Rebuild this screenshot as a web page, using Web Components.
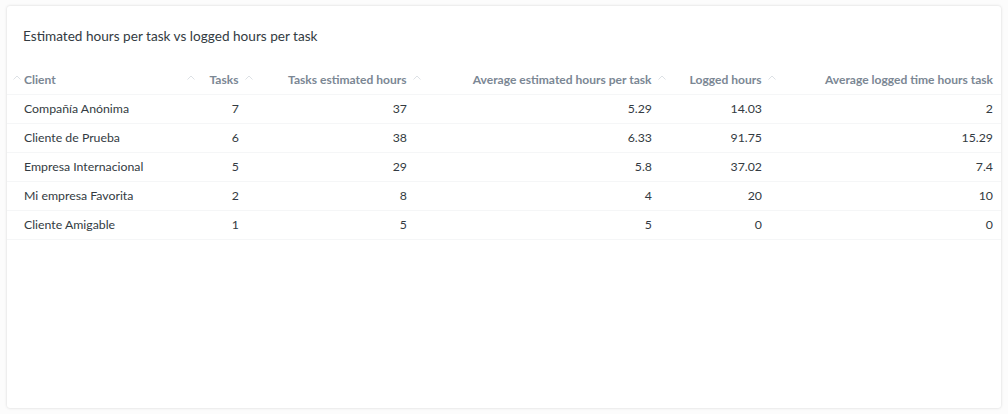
<!DOCTYPE html>
<html>
<head>
<meta charset="utf-8">
<title>Estimated hours per task</title>
<style>
  html, body { margin: 0; height: 100%; background: #fcfcfc; }
  body { padding: 6px 7px 6px 7px; box-sizing: border-box; height: 414px; font-family: Lato, "Open Sans", sans-serif; overflow: hidden; }
</style>
</head>
<body>
<report-card heading="Estimated hours per task vs logged hours per task">
  <report-table></report-table>
</report-card>

<script>
//card with a heading, content goes in the slot
const cardTpl = document.createElement("template");
cardTpl.innerHTML = `
<style>
  :host { display: block; height: 100%; box-sizing: border-box; background: #fff; border-radius: 3px;
    box-shadow: 0 0 3px rgba(0,0,0,.16); padding: 20px 0 0 0; }
  h2 { margin: 0 0 26px 16px; font-size: 13.6px; line-height: 20px; font-weight: 400; color: #333b42; }
</style>
<h2></h2>
<slot></slot>`;
class ReportCard extends HTMLElement {
  constructor() {
    super();
    this.attachShadow({ mode: "open" }).appendChild(cardTpl.content.cloneNode(true));
  }
  connectedCallback() {
    this.shadowRoot.querySelector("h2").textContent = this.getAttribute("heading");
  }
}
customElements.define("report-card", ReportCard);

//little chevron of a sortable column
class SortArrow extends HTMLElement {
  constructor() {
    super();
    this.attachShadow({ mode: "open" }).innerHTML = `
<style>
  :host { display: block; width: 8px; height: 5px; line-height: 0; }
  svg { display: block; }
</style>
<svg width="8" height="5" viewBox="0 0 8 5" fill="none" stroke="#dde1e5" stroke-width="1"><path d="M.5 4.5 4 1l3.5 3.5"/></svg>`;
  }
}
customElements.define("sort-arrow", SortArrow);

const columns = ["Client", "Tasks", "Tasks estimated hours", "Average estimated hours per task", "Logged hours", "Average logged time hours task"];
const rows = [
  ["Compañía Anónima", 7, 37, 5.29, 14.03, 2],
  ["Cliente de Prueba", 6, 38, 6.33, 91.75, 15.29],
  ["Empresa Internacional", 5, 29, 5.8, 37.02, 7.4],
  ["Mi empresa Favorita", 2, 8, 4, 20, 10],
  ["Cliente Amigable", 1, 5, 5, 0, 0]
];

class ReportTable extends HTMLElement {
  constructor() {
    super();
    this.attachShadow({ mode: "open" });
  }
  connectedCallback() {
    const head = columns.map(c => `<div class="th"><sort-arrow></sort-arrow><span>${c}</span></div>`).join("");
    const body = rows.map(r => `<div class="tr">${r.map(v => `<div class="td">${v}</div>`).join("")}</div>`).join("");
    this.shadowRoot.innerHTML = `
<style>
  :host { display: block; --cols: 178px 58px 168px 245px 110px 235px; }
  .tr { display: grid; grid-template-columns: var(--cols); height: 29px; box-sizing: border-box; border-bottom: 1px solid #f5f6f7; }
  .head { height: 23px; }
  .th { position: relative; font-size: 12.05px; line-height: 16px; font-weight: 700; color: #7b8794; text-align: right; padding: 0 4.5px 0 0; }
  .td { font-size: 12.3px; line-height: 28px; color: #333b42; text-align: right; padding: 0 4px 0 0; }
  .th:first-child, .td:first-child { text-align: left; padding: 0 0 0 17px; }
  .th:last-child, .td:last-child { padding-right: 8px; }
  sort-arrow { position: absolute; left: 2px; top: 3px; }
  .th:first-child sort-arrow { left: 6px; }
</style>
<div class="tr head">${head}</div>
${body}`;
  }
}
customElements.define("report-table", ReportTable);
</script>
</body>
</html>
